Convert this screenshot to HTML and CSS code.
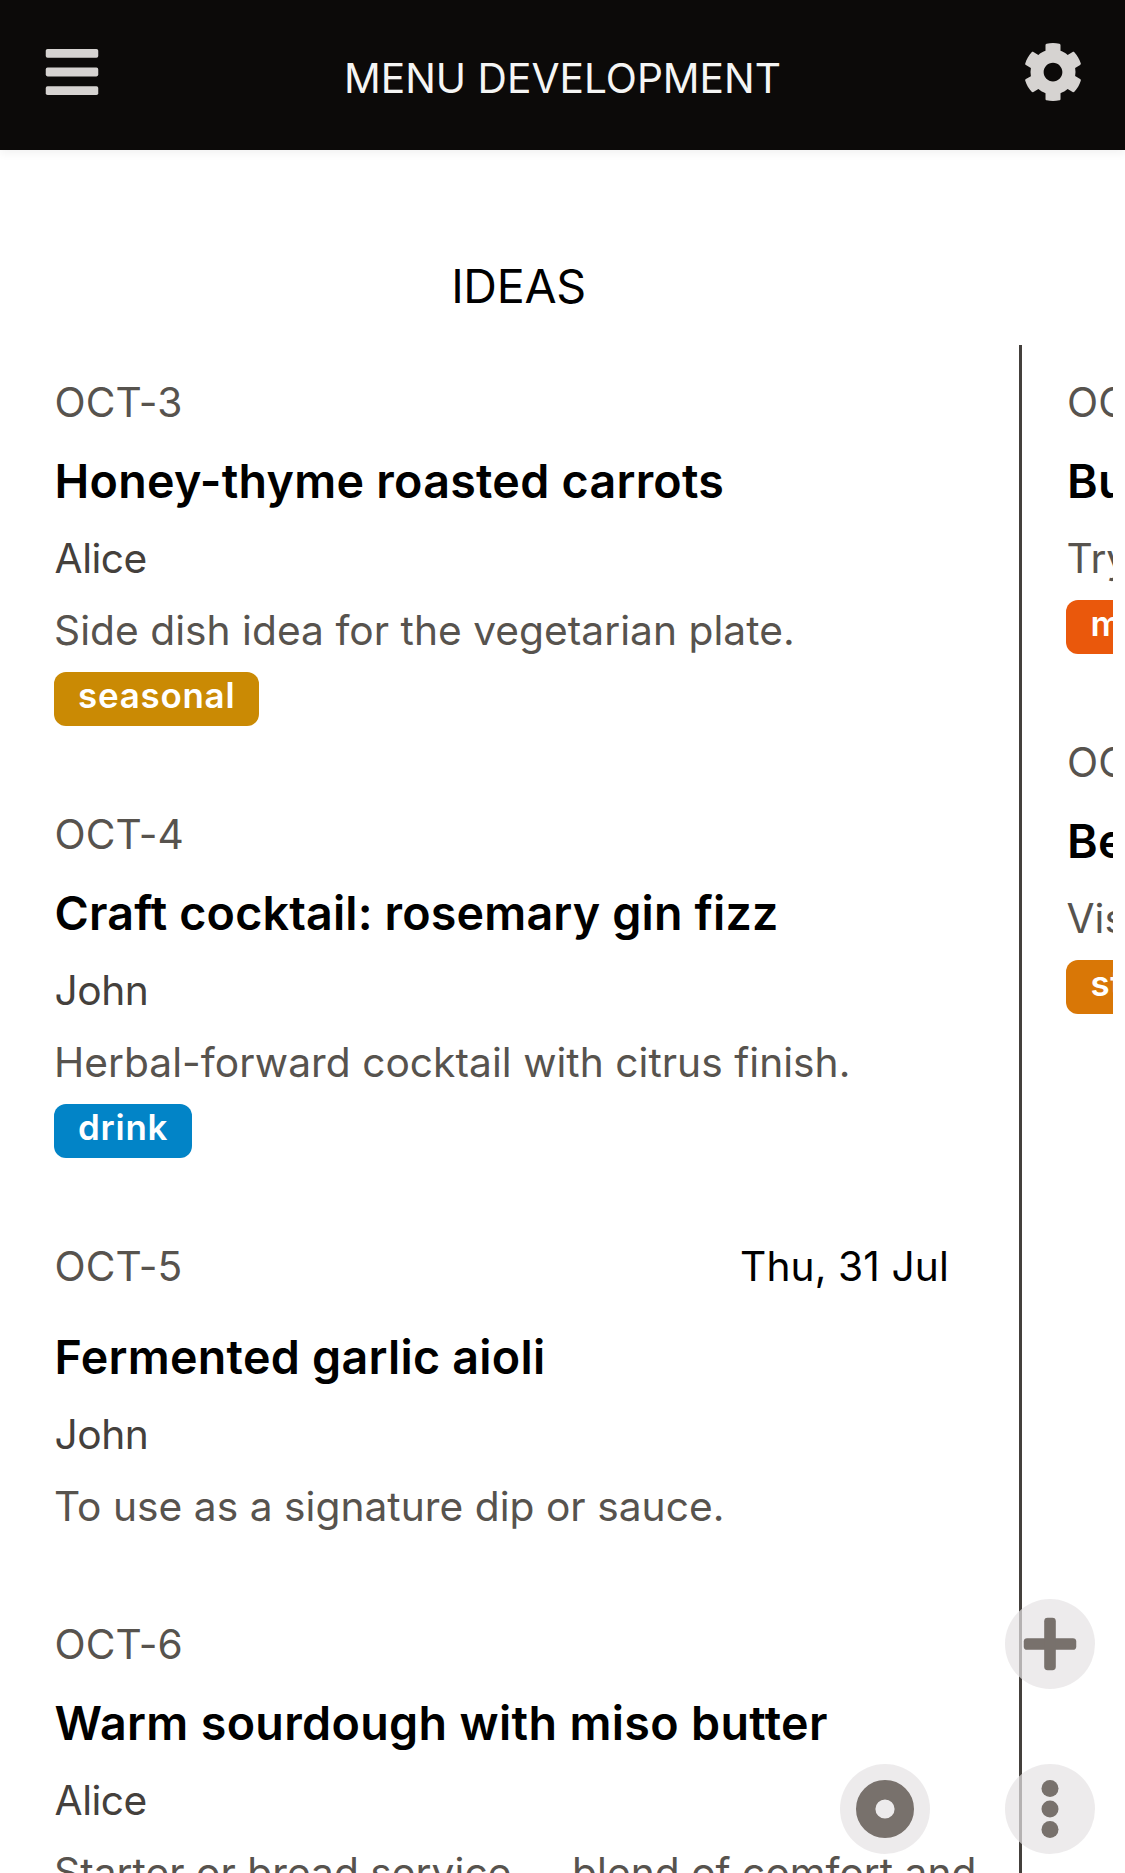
FILE: index.html
```html
<!DOCTYPE html>
<html lang="en">
<head>
<meta charset="utf-8">
<title>Menu Development</title>
<link rel="stylesheet" href="styles.css">
</head>
<body>
<header class="topbar">
  <svg class="icon" viewBox="0 0 60 60" aria-label="Menu"><rect x="3.75" y="7" width="52.5" height="8.8" rx="1.8"/><rect x="3.75" y="25.6" width="52.5" height="8.8" rx="1.8"/><rect x="3.75" y="44.2" width="52.5" height="8.8" rx="1.8"/></svg>
  <h1 class="topbar-title">MENU DEVELOPMENT</h1>
  <svg class="icon" viewBox="0 0 512 512" aria-label="Settings"><path d="M487.4 315.7l-42.6-24.6c4.3-23.2 4.3-47 0-70.2l42.6-24.6c4.9-2.8 7.1-8.6 5.5-14-11.1-35.6-30-67.8-54.7-94.6-3.8-4.1-10-5.1-14.8-2.3L380.8 110c-17.9-15.4-38.5-27.3-60.8-35.1V25.8c0-5.6-3.9-10.5-9.4-11.7-36.7-8.2-74.3-7.8-109.2 0-5.5 1.2-9.4 6.1-9.4 11.7V75c-22.2 7.9-42.8 19.8-60.8 35.1L88.7 85.5c-4.9-2.8-11-1.9-14.8 2.3-24.7 26.7-43.6 58.9-54.7 94.6-1.7 5.4.6 11.2 5.5 14L67.3 221c-4.3 23.2-4.3 47 0 70.2l-42.6 24.6c-4.9 2.8-7.1 8.6-5.5 14 11.1 35.6 30 67.8 54.7 94.6 3.8 4.1 10 5.1 14.8 2.3l42.6-24.6c17.9 15.4 38.5 27.3 60.8 35.1v49.2c0 5.6 3.9 10.5 9.4 11.7 36.7 8.2 74.3 7.8 109.2 0 5.5-1.2 9.4-6.1 9.4-11.7v-49.2c22.2-7.9 42.8-19.8 60.8-35.1l42.6 24.6c4.9 2.8 11 1.9 14.8-2.3 24.7-26.7 43.6-58.9 54.7-94.6 1.5-5.5-.7-11.3-5.6-14.1zM256 336c-44.1 0-80-35.9-80-80s35.9-80 80-80 80 35.9 80 80-35.9 80-80 80z"/></svg>
</header>
<main class="board">
  <section class="column">
    <h2 class="column-title">IDEAS</h2>
    <div class="cards">
      <article class="card">
        <div class="card-head"><span class="key">OCT-3</span></div>
        <h3 class="card-title">Honey-thyme roasted carrots</h3>
        <p class="person">Alice</p>
        <p class="desc">Side dish idea for the vegetarian plate.</p>
        <span class="tag tag-seasonal">seasonal</span>
      </article>
      <article class="card">
        <div class="card-head"><span class="key">OCT-4</span></div>
        <h3 class="card-title card-title-snug">Craft cocktail: rosemary gin fizz</h3>
        <p class="person">John</p>
        <p class="desc">Herbal-forward cocktail with citrus finish.</p>
        <span class="tag tag-drink">drink</span>
      </article>
      <article class="card">
        <div class="card-head card-head-dated"><span class="key">OCT-5</span><time class="date">Thu, 31 Jul</time></div>
        <h3 class="card-title">Fermented garlic aioli</h3>
        <p class="person">John</p>
        <p class="desc">To use as a signature dip or sauce.</p>
      </article>
      <article class="card">
        <div class="card-head"><span class="key">OCT-6</span></div>
        <h3 class="card-title card-title-wide">Warm sourdough with miso butter</h3>
        <p class="person">Alice</p>
        <p class="desc">Starter or bread service <span class="dash">—</span> blend of comfort and</p>
      </article>
    </div>
  </section>
  <section class="column column-next">
    <div class="cards">
      <article class="card">
        <div class="card-head"><span class="key">OC</span></div>
        <h3 class="card-title">Bu</h3>
        <p class="desc">Try</p>
        <span class="tag tag-main">m</span>
      </article>
      <article class="card">
        <div class="card-head"><span class="key">OC</span></div>
        <h3 class="card-title">Be</h3>
        <p class="desc">Vis</p>
        <span class="tag tag-starter">st</span>
      </article>
    </div>
  </section>
</main>
<nav class="actions">
  <button class="fab fab-add" aria-label="Add"><svg class="fab-icon" viewBox="0 0 60 60"><rect x="3.75" y="24.2" width="52.5" height="11.6" rx="3.4"/><rect x="24.2" y="3.75" width="11.6" height="52.5" rx="3.4"/></svg></button>
  <button class="fab" aria-label="Focus"><svg class="fab-icon" viewBox="0 0 60 60"><circle class="ring" cx="30" cy="30" r="19.3"/></svg></button>
  <button class="fab" aria-label="More"><svg class="fab-icon" viewBox="0 0 60 60"><circle cx="30" cy="9.4" r="8.5"/><circle cx="30" cy="30" r="8.5"/><circle cx="30" cy="50.6" r="8.5"/></svg></button>
</nav>
</body>
</html>
```
FILE: styles.css
```css
* { box-sizing: border-box; }
html, body { height: 100%; overflow: hidden; }
body {
  margin: 0;
  display: flex;
  flex-direction: column;
  background: #fff;
  color: #000;
  font-family: Inter, sans-serif;
  font-size: 40.7px;
  line-height: 62px;
}
h1, h2, h3, p { margin: 0; font-weight: 400; }

.topbar {
  flex: none;
  display: flex;
  align-items: center;
  justify-content: space-between;
  height: 150px;
  padding: 0 42px 6px;
  background: #0c0a09;
  box-shadow: 0 3px 9px rgba(0, 0, 0, .06);
}
.topbar-title { font-size: 40.7px; color: #f5f5f4; padding-top: 14px; }
.icon { width: 60px; height: 60px; fill: #d6d3d1; }

.board {
  flex: 1;
  min-height: 0;
  display: flex;
  margin: 0 12px 0 18px;
  overflow: hidden;
}
.column {
  flex: none;
  width: 1004px;
  padding-top: 99px;
}
.column-title {
  height: 96px;
  padding: 1px 3px 0 0;
  text-align: center;
  font-size: 46.6px;
  line-height: 72px;
  letter-spacing: -.3px;
}
.cards {
  display: flex;
  flex-direction: column;
  gap: 78px;
  min-height: 1700px;
  padding: 27px 70px 0 36px;
  border-right: 3px solid #44403c;
}
.column-next { padding: 195px 0 0 8.4px; }
.card {
  display: flex;
  flex-direction: column;
  align-items: flex-start;
  gap: 12px;
  white-space: nowrap;
}
.card-head { display: flex; justify-content: space-between; width: 100%; height: 60px; }
.card-head-dated { height: 72px; }
.key, .person, .card-title { padding-left: .6px; }
.key { color: #57534e; letter-spacing: .05px; }
.desc { height: 60px; color: #57534e; letter-spacing: .03px; }
.dash { display: inline-block; height: 50px; line-height: 62px; margin: 0 -1.5px; transform: translateY(4px); }
.person { height: 60px; color: #44403c; letter-spacing: -.5px; }
.date { letter-spacing: .1px; }
.card-title {
  height: 72px;
  font-size: 46.6px;
  line-height: 74px;
  font-weight: 600;
  letter-spacing: .27px;
}
.card-title-snug { letter-spacing: .17px; }
.card-title-wide { letter-spacing: .35px; }

.tag {
  height: 54px;
  padding: 0 24px 8px;
  border-radius: 12px;
  color: #fff;
  font-size: 34.9px;
  font-weight: 600;
  line-height: 46px;
  letter-spacing: .78px;
}
.tag-seasonal { background: #ca8a04; }
.tag-drink { background: #0284c7; }
.tag-main { background: #ea580c; }
.tag-starter { background: #d97706; }

.actions {
  position: fixed;
  right: 30px;
  bottom: 19px;
  display: grid;
  grid-template-columns: 90px 90px;
  gap: 75px;
}
.fab {
  display: flex;
  align-items: center;
  justify-content: center;
  width: 90px;
  height: 90px;
  padding: 0;
  border: 0;
  border-radius: 50%;
  background: rgba(230, 227, 228, .7);
}
.fab-add { grid-column: 2; }
.fab-icon { width: 60px; height: 60px; fill: #78716c; }
.ring { fill: none; stroke: #78716c; stroke-width: 19.4; }
```
